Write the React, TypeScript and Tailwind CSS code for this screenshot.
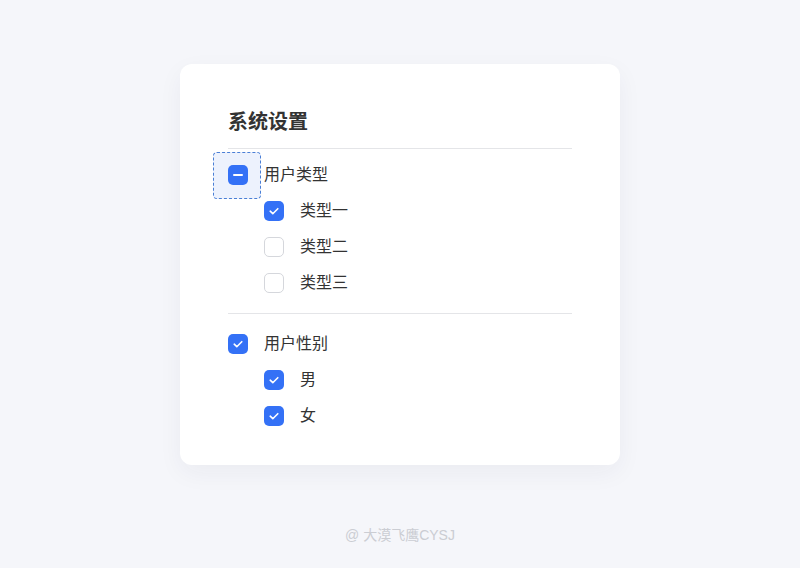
import { useState } from "react";

type Option = { label: string; checked: boolean };
type Group = { title: string; options: Option[] };

const initialGroups: Group[] = [
  {
    title: "用户类型",
    options: [
      { label: "类型一", checked: true },
      { label: "类型二", checked: false },
      { label: "类型三", checked: false },
    ],
  },
  {
    title: "用户性别",
    options: [
      { label: "男", checked: true },
      { label: "女", checked: true },
    ],
  },
];

const Box = ({
  state,
  focused,
  onClick,
}: {
  state: "on" | "off" | "mixed";
  focused?: boolean;
  onClick: () => void;
}) => (
  <button
    type="button"
    onClick={onClick}
    className={`relative flex h-5 w-5 shrink-0 items-center justify-center rounded-[5px] ${
      state === "off" ? "border border-[#d5d7dc] bg-white" : "bg-[#3471f6]"
    }`}
  >
    {focused && (
      <span className="absolute left-[-15px] top-[-13px] h-[47px] w-[48px] rounded-[4px] border border-dashed border-[#4a7fd6] bg-[#edf2fd]" />
    )}
    {focused && <span className="absolute inset-0 rounded-[5px] bg-[#3471f6]" />}
    {state === "on" && (
      <svg viewBox="0 0 20 20" className="relative h-5 w-5">
        <path
          d="M6.2 10.2l2.6 2.5 5-5"
          fill="none"
          stroke="#fff"
          strokeWidth="1.6"
          strokeLinecap="round"
          strokeLinejoin="round"
        />
      </svg>
    )}
    {state === "mixed" && (
      <span className="relative h-[1.6px] w-[10px] rounded-full bg-white" />
    )}
  </button>
);

const App = () => {
  const [groups, setGroups] = useState(initialGroups);

  const toggleAll = (gi: number) => {
    setGroups((prev) =>
      prev.map((g, i) => {
        if (i !== gi) return g;
        const all = g.options.every((o) => o.checked);
        return { ...g, options: g.options.map((o) => ({ ...o, checked: !all })) };
      })
    );
  };

  const toggleOne = (gi: number, oi: number) => {
    setGroups((prev) =>
      prev.map((g, i) =>
        i !== gi
          ? g
          : {
              ...g,
              options: g.options.map((o, j) => (j === oi ? { ...o, checked: !o.checked } : o)),
            }
      )
    );
  };

  return (
    <div
      className="flex h-[568px] w-full flex-col items-center bg-[#f5f6fa] pt-16"
      style={{ fontFamily: '"Liberation Sans", "Noto Sans CJK SC", sans-serif' }}
    >
      <div className="w-[440px] rounded-xl bg-white px-12 pb-[31px] pt-[44px] shadow-[0_8px_24px_rgba(30,40,80,0.05)]">
        <h2 className="text-[20px] font-bold leading-7 text-[#333]">系统设置</h2>
        <div className="mt-3 h-px bg-[#e4e5e8]" />

        {groups.map((g, gi) => {
          const count = g.options.filter((o) => o.checked).length;
          const state = count === 0 ? "off" : count === g.options.length ? "on" : "mixed";
          return (
            <div key={g.title}>
              {gi > 0 && <div className="my-3 h-px bg-[#e4e5e8]" />}
              <div className={gi === 0 ? "mt-2" : ""}>
                <div className="flex h-9 items-center gap-4">
                  <Box state={state} focused={gi === 0} onClick={() => toggleAll(gi)} />
                  <span className="text-[16px] text-[#333]">{g.title}</span>
                </div>
                {g.options.map((o, oi) => (
                  <div key={o.label} className="flex h-9 items-center gap-4 pl-9">
                    <Box state={o.checked ? "on" : "off"} onClick={() => toggleOne(gi, oi)} />
                    <span className="text-[16px] text-[#333]">{o.label}</span>
                  </div>
                ))}
              </div>
            </div>
          );
        })}
      </div>

      <div className="mt-auto pb-[22px] text-[14px] text-[#cbcdd3]">@ 大漠飞鹰CYSJ</div>
    </div>
  );
};

export default App;
